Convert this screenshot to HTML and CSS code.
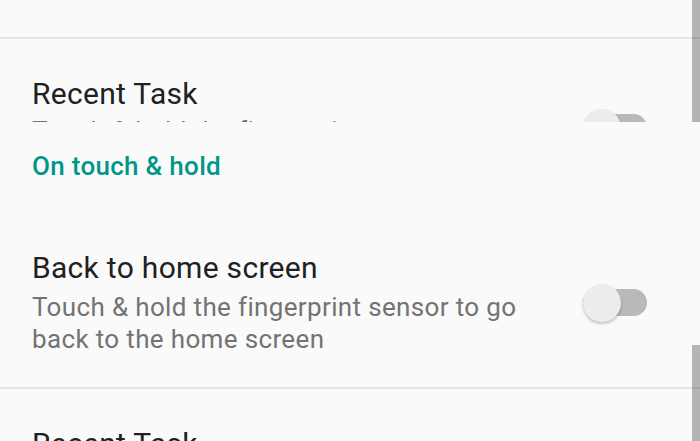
FILE: index.html
```html
<!DOCTYPE html>
<html lang="en">
<head>
<meta charset="utf-8">
<title>Fingerprint gestures</title>
<link rel="stylesheet" href="styles.css">
</head>
<body>
<div class="screen">
  <div class="clip-top">
    <div class="prev-row"></div>
    <div class="divider"></div>
    <div class="row">
      <div class="text">
        <div class="title">Recent Task</div>
        <div class="summary summary-tight">Touch &amp; hold the fingerprint sensor to open recent tasks</div>
      </div>
      <div class="switch"><div class="thumb"></div></div>
    </div>
  </div>
  <div class="section-header">On touch &amp; hold</div>
  <div class="row">
    <div class="text">
      <div class="title">Back to home screen</div>
      <div class="summary">Touch &amp; hold the fingerprint sensor to go back to the home screen</div>
    </div>
    <div class="switch"><div class="thumb"></div></div>
  </div>
  <div class="divider"></div>
  <div class="row">
    <div class="text">
      <div class="title">Recent Task</div>
      <div class="summary">Touch &amp; hold the fingerprint sensor to open recent tasks</div>
    </div>
    <div class="switch"><div class="thumb"></div></div>
  </div>
  <div class="scrollbar scrollbar-top"></div>
  <div class="scrollbar scrollbar-bottom"></div>
</div>
</body>
</html>
```
FILE: styles.css
```css
html, body {
  margin: 0;
  padding: 0;
  background: #fafafa;
}
body {
  font-family: Roboto, "Noto Sans", "Liberation Sans", sans-serif;
  width: 700px;
  height: 441px;
  overflow: hidden;
}
.screen {
  position: relative;
  width: 700px;
  height: 441px;
  overflow: hidden;
  display: flex;
  flex-direction: column;
}
.clip-top {
  height: 122px;
  flex: none;
  overflow: hidden;
}
.prev-row {
  height: 37px;
}
.divider {
  height: 2px;
  flex: none;
  background: #e3e3e3;
}
.row {
  flex: none;
  display: flex;
  align-items: center;
  gap: 40px;
  padding: 37px 53px 32px 32px;
}
.text {
  flex: 1;
  min-width: 0;
}
.title {
  font-size: 30px;
  line-height: 36px;
  letter-spacing: 0.3px;
  color: #212121;
}
.summary {
  margin-top: 5px;
  font-size: 26px;
  line-height: 32px;
  letter-spacing: 0.35px;
  color: #737373;
}
.summary-tight {
  margin-top: 3px;
}
.switch {
  flex: none;
  width: 64px;
  height: 27px;
  border-radius: 14px;
  background: #b9b9b9;
  display: flex;
  align-items: center;
}
.thumb {
  flex: none;
  width: 38px;
  height: 38px;
  border-radius: 50%;
  background: #ececec;
  box-shadow: 0 2px 3px rgba(0, 0, 0, 0.22);
}
.section-header {
  flex: none;
  box-sizing: border-box;
  height: 91px;
  padding: 29px 32px 0;
  font-size: 26px;
  line-height: 30px;
  letter-spacing: 0.3px;
  font-weight: 500;
  color: #009688;
  background: #fafafa;
}
.scrollbar {
  position: absolute;
  right: 0;
  width: 8px;
  background: rgba(0, 0, 0, 0.28);
}
.scrollbar-top {
  top: 0;
  height: 122px;
}
.scrollbar-bottom {
  top: 345px;
  bottom: 0;
}
```
